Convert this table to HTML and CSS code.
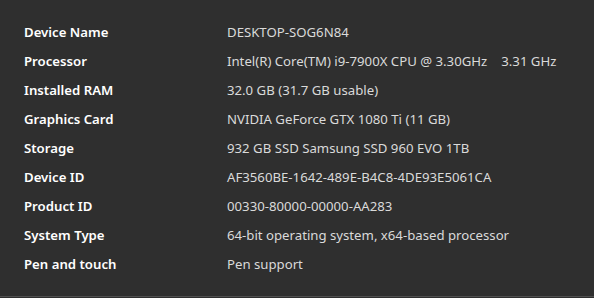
FILE: index.html
```html
<!DOCTYPE html>
<html>
<head>
<meta charset="utf-8">
<link rel="stylesheet" href="styles.css">
</head>
<body>
<div class="panel">
  <dl class="specs">
    <dt>Device Name</dt><dd>DESKTOP-SOG6N84</dd>
    <dt>Processor</dt><dd>Intel(R) Core(TM) i9-7900X CPU @ 3.30GHz<span class="freq">3.31 GHz</span></dd>
    <dt>Installed RAM</dt><dd>32.0 GB (31.7 GB usable)</dd>
    <dt>Graphics Card</dt><dd>NVIDIA GeForce GTX 1080 Ti (11 GB)</dd>
    <dt>Storage</dt><dd>932 GB SSD Samsung SSD 960 EVO 1TB</dd>
    <dt>Device ID</dt><dd>AF3560BE-1642-489E-B4C8-4DE93E5061CA</dd>
    <dt>Product ID</dt><dd>00330-80000-00000-AA283</dd>
    <dt>System Type</dt><dd>64-bit operating system, x64-based processor</dd>
    <dt>Pen and touch</dt><dd>Pen support</dd>
  </dl>
</div>
</body>
</html>
```
FILE: styles.css
```css
html, body {
  margin: 0;
  padding: 0;
  background: #2f2f2f;
}
.panel {
  box-sizing: border-box;
  width: 594px;
  height: 297px;
  border-bottom: 1px solid #505050;
  padding: 17px 0 0 24px;
  font-family: "Noto Sans", "Open Sans", sans-serif;
  font-size: 13px;
}
.specs {
  margin: 0;
  display: grid;
  grid-template-columns: 203px 1fr;
  grid-auto-rows: 29px;
  align-items: center;
}
.specs dt {
  color: #ffffff;
  font-weight: 600;
  font-size: 13.2px;
}
.specs dd {
  margin: 0;
  color: #dadada;
  white-space: nowrap;
  font-size: 13.2px;
}
.freq {
  margin-left: 14px;
}
```
